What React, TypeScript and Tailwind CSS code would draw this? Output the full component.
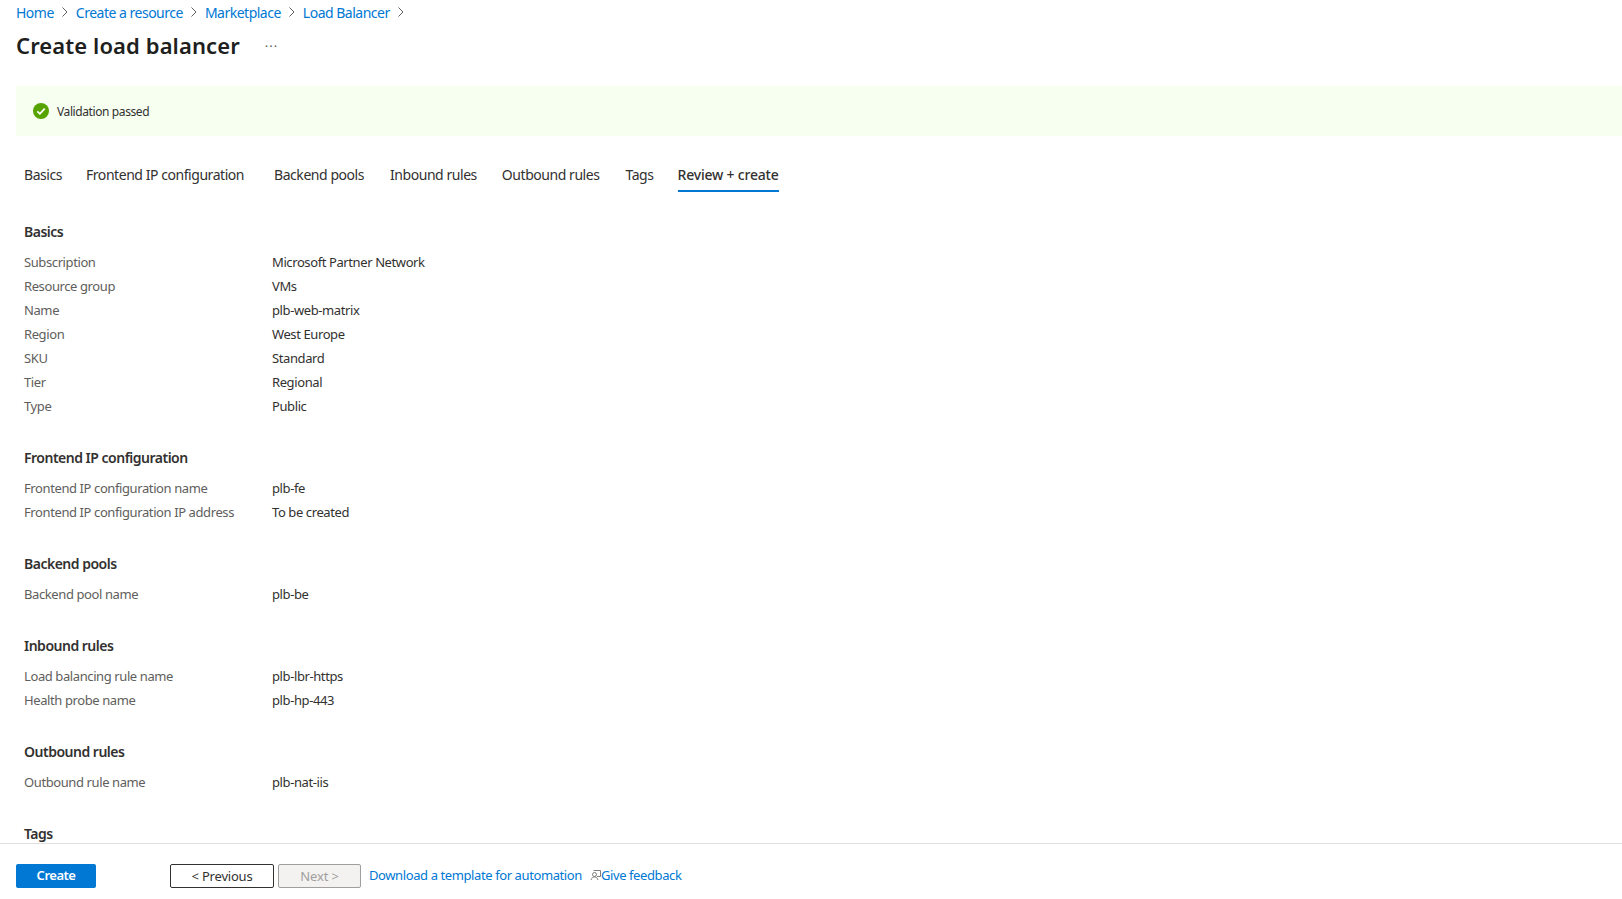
const crumbs = ["Home", "Create a resource", "Marketplace", "Load Balancer"];

const tabs = [
  { label: "Basics", cls: "ml-2" },
  { label: "Frontend IP configuration", cls: "ml-6" },
  { label: "Backend pools", cls: "ml-[30px]" },
  { label: "Inbound rules", cls: "ml-[26px]" },
  { label: "Outbound rules", cls: "ml-[25px]" },
  { label: "Tags", cls: "ml-[26px]" },
];

const sections = [
  {
    title: "Basics",
    rows: [
      ["Subscription", "Microsoft Partner Network"],
      ["Resource group", "VMs"],
      ["Name", "plb-web-matrix"],
      ["Region", "West Europe"],
      ["SKU", "Standard"],
      ["Tier", "Regional"],
      ["Type", "Public"],
    ],
  },
  {
    title: "Frontend IP configuration",
    rows: [
      ["Frontend IP configuration name", "plb-fe"],
      ["Frontend IP configuration IP address", "To be created"],
    ],
  },
  { title: "Backend pools", rows: [["Backend pool name", "plb-be"]] },
  {
    title: "Inbound rules",
    rows: [
      ["Load balancing rule name", "plb-lbr-https"],
      ["Health probe name", "plb-hp-443"],
    ],
  },
  { title: "Outbound rules", rows: [["Outbound rule name", "plb-nat-iis"]] },
  { title: "Tags", rows: [] as string[][] },
];

function Chevron() {
  return (
    <svg width="8" height="12" viewBox="0 0 8 12" fill="none" className="mx-[7px]">
      <path d="M1.5 1.5 6 6l-4.500 4.500" stroke="#605e5c" strokeWidth="1" />
    </svg>
  );
}

export default function App() {
  return (
    <div className="flex flex-col h-[899px] overflow-hidden bg-white text-[13px] tracking-[-0.4px] text-[#323130] font-['Noto_Sans',sans-serif]">
      <main className="flex-1 overflow-hidden">
        {/* BREADCRUMB */}
        <nav className="flex items-center h-6 pl-4 text-[#0078d4] text-[14px] tracking-[-0.5px]">
          {crumbs.map((c) => (
            <div key={c} className="flex items-center">
              <span>{c}</span>
              <Chevron />
            </div>
          ))}
        </nav>

        {/* TITLE */}
        <div className="flex items-center h-[42px] pl-4">
          <h1 className="text-[22px] leading-8 font-semibold tracking-[0.1px] text-[#201f1e]">Create load balancer</h1>
          <span className="ml-[25px] mt-[2px] text-[13px] leading-none tracking-[1px] text-[#605e5c]">···</span>
        </div>

        {/* VALIDATION BANNER */}
        <div className="flex items-center gap-2 h-[50px] ml-4 mt-5 pl-[17px] bg-[#f7fff0] text-[12px]">
          <svg width="16" height="16" viewBox="0 0 16 16">
            <circle cx="8" cy="8" r="8" fill="#57a300" />
            <path d="M4.300 8.300 6.900 10.800 11.700 5.600" fill="none" stroke="#fff" strokeWidth="1.800" />
          </svg>
          <span className="pt-[2px]">Validation passed</span>
        </div>

        {/* TABS */}
        <div className="flex items-start h-[40px] mt-[28px] ml-4 text-[14px] tracking-[-0.45px]">
          {tabs.map((t) => (
            <span key={t.label} className={`leading-[22px] ${t.cls}`}>
              {t.label}
            </span>
          ))}
          <span className="ml-6 h-[28px] leading-[22px] font-medium tracking-[-0.2px] border-b-2 border-[#0078d4]">Review + create</span>
        </div>

        {/* SUMMARY */}
        <div className="flex flex-col gap-7 pl-6 pt-4">
          {sections.map((s) => (
            <section key={s.title}>
              <h2 className="h-[30px] leading-6 text-[14px] font-semibold tracking-[-0.5px]">{s.title}</h2>
              {s.rows.map(([k, v]) => (
                <div key={k} className="flex h-6 leading-6">
                  <span className="w-[248px] text-[#605e5c]">{k}</span>
                  <span>{v}</span>
                </div>
              ))}
            </section>
          ))}
        </div>
      </main>

      {/* FOOTER */}
      <footer className="flex items-start h-[56px] shrink-0 pl-4 pt-5 border-t border-[#e1dfdd] bg-white leading-[22px]">
        <button className="w-20 h-6 pb-[2px] rounded-[2px] bg-[#0078d4] text-white font-semibold tracking-[-0.5px]">Create</button>
        <button className="w-[104px] h-6 pb-[2px] ml-[74px] rounded-[2px] border border-[#323130] tracking-[-0.2px]">{"< Previous"}</button>
        <button className="w-[83px] h-6 pb-[2px] ml-1 rounded-[2px] border border-[#a19f9d] bg-[#f3f2f1] text-[#a19f9d] tracking-[-0.1px]">{"Next >"}</button>
        <span className="ml-2 text-[#0078d4]">Download a template for automation</span>
        <svg width="11" height="12" viewBox="0 0 11 12" fill="none" className="ml-2 mt-[5px]">
          <path d="M3.500 1.500h7v6H7" stroke="#605e5c" strokeWidth="0.800" />
          <circle cx="4.500" cy="5.500" r="2" stroke="#605e5c" strokeWidth="0.800" />
          <path d="M1 11c.5-2 1.800-3 3.500-3S7.500 9 8 11" stroke="#605e5c" strokeWidth="0.800" />
        </svg>
        <span className="text-[#0078d4]">Give feedback</span>
      </footer>
    </div>
  );
}
